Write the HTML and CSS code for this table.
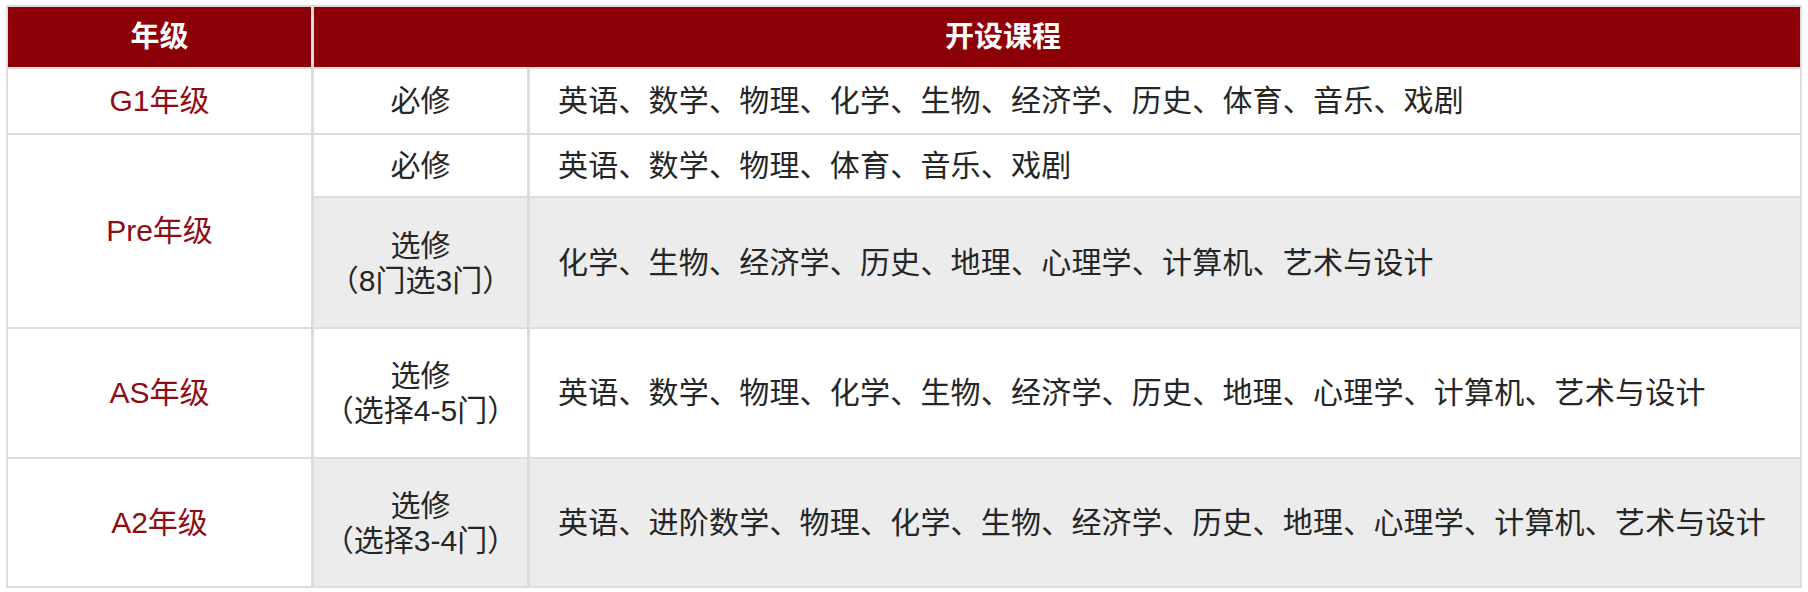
FILE: index.html
```html
<!DOCTYPE html>
<html lang="zh">
<head>
<meta charset="utf-8">
<title>开设课程</title>
<link rel="stylesheet" href="styles.css">
</head>
<body>
<div class="table">
  <div class="cell head">年级</div>
  <div class="cell head head-wide">开设课程</div>

  <div class="cell grade">G1年级</div>
  <div class="cell type">必修</div>
  <div class="cell list">英语、数学、物理、化学、生物、经济学、历史、体育、音乐、戏剧</div>

  <div class="cell grade grade-pre">Pre年级</div>
  <div class="cell type">必修</div>
  <div class="cell list">英语、数学、物理、体育、音乐、戏剧</div>
  <div class="cell type shade"><span class="line">选修</span><span class="line">（8门选3门）</span></div>
  <div class="cell list shade">化学、生物、经济学、历史、地理、心理学、计算机、艺术与设计</div>

  <div class="cell grade">AS年级</div>
  <div class="cell type"><span class="line">选修</span><span class="line">（选择4-5门）</span></div>
  <div class="cell list">英语、数学、物理、化学、生物、经济学、历史、地理、心理学、计算机、艺术与设计</div>

  <div class="cell grade">A2年级</div>
  <div class="cell type shade"><span class="line">选修</span><span class="line">（选择3-4门）</span></div>
  <div class="cell list shade">英语、进阶数学、物理、化学、生物、经济学、历史、地理、心理学、计算机、艺术与设计</div>
</div>
</body>
</html>
```

FILE: styles.css
```css
html, body {
  margin: 0;
  padding: 0;
  background: #ffffff;
}

body {
  font-family: "Liberation Sans", "Noto Sans CJK SC", sans-serif;
  font-size: 30px;
  color: #262626;
}

.table {
  display: grid;
  grid-template-columns: 303px 213px 1270px;
  grid-template-rows: 60px 64px 61px 129px 128px 127px;
  gap: 2px 3px;
  padding: 2px;
  background: #dcdcdc;
  margin: 5px 0 0 6px;
  width: max-content;
}

.cell {
  background: #ffffff;
  display: flex;
  align-items: center;
  justify-content: center;
  text-align: center;
  line-height: 36px;
  white-space: nowrap;
}

.type {
  flex-direction: column;
}

.line {
  display: block;
  line-height: 35px;
}

.head {
  background: #8c0008;
  color: #ffffff;
  font-weight: 700;
  font-size: 29px;
}

.head-wide {
  grid-column: span 2;
  padding-right: 108px;
}

.grade {
  color: #8e0c12;
}

.grade-pre {
  grid-row: span 2;
}

.list {
  justify-content: flex-start;
  padding-left: 28px;
  text-align: left;
  letter-spacing: 0.2px;
}

.shade {
  background: #ececec;
}
```
